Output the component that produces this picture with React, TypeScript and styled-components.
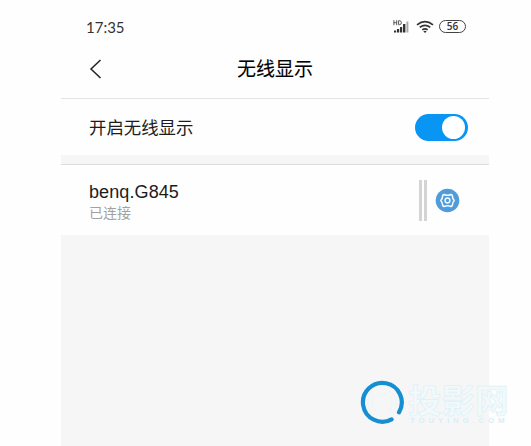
import React from "react";
import styled, { createGlobalStyle } from "styled-components";

const GlobalStyle = createGlobalStyle`
  html, body { margin: 0; background: #fff; overflow: hidden; }
  * { box-sizing: border-box; }
`;

const Page = styled.main`
  position: relative;
  width: 531px;
  height: 446px;
  padding-left: 61px;
  background: #fefefe;
  overflow: hidden;
  color: #1c1c1c;
  font-family: "Liberation Sans", "Noto Sans CJK SC", sans-serif;
`;

const Phone = styled.section`
  display: flex;
  flex-direction: column;
  width: 428px;
  height: 446px;
  background: #f6f6f6;
`;

const StatusBar = styled.div`
  display: flex;
  align-items: center;
  justify-content: space-between;
  height: 42px;
  padding: 11px 23px 0 25px;
  background: #fefefe;
`;

const Time = styled.span`
  font: 400 15px/20px Lato, sans-serif;
  color: #333;
`;

const StatusIcons = styled.div`
  display: flex;
  align-items: center;
`;

const WifiSlot = styled.span`
  display: flex;
  margin-left: 6px;
`;

const Battery = styled.span`
  width: 27px;
  height: 13px;
  margin-left: 5px;
  border: 1px solid #444;
  border-radius: 7px;
  font: 600 10px/11px "Open Sans", sans-serif;
  text-align: center;
  color: #333;
`;

const Header = styled.header`
  display: grid;
  grid-template-columns: 60px 1fr 60px;
  align-items: center;
  height: 57px;
  padding-bottom: 3px;
  border-bottom: 1px solid #e4e4e4;
  background: #fefefe;
`;

const BackButton = styled.button`
  display: flex;
  padding: 0 0 0 28px;
  border: 0;
  background: none;
`;

const Title = styled.h1`
  margin: 2px 0 0;
  font-size: 19px;
  font-weight: 400;
  line-height: 28px;
  text-align: center;
  color: #000;
  -webkit-text-stroke: 0.1px #000;
`;

const SettingRow = styled.div`
  display: flex;
  align-items: center;
  justify-content: space-between;
  height: 56px;
  padding: 0 21px 0 28px;
  background: #fefefe;
`;

const SettingLabel = styled.span`
  padding-top: 2px;
  font-size: 17.4px;
  line-height: 26px;
`;

const Toggle = styled.button`
  display: flex;
  justify-content: flex-end;
  width: 53px;
  height: 27px;
  padding: 2px 3px;
  border: 0;
  border-radius: 14px;
  background: #0895f4;
`;

const Knob = styled.span`
  width: 23px;
  height: 23px;
  border-radius: 50%;
  background: #fff;
`;

const DeviceRow = styled.div`
  display: flex;
  align-items: center;
  height: 71px;
  margin-top: 9px;
  padding: 0 29px 0 28px;
  border-top: 1px solid #dcdcdc;
  background: #fefefe;
`;

const DeviceText = styled.div`
  display: flex;
  flex: 1;
  flex-direction: column;
  padding-top: 3px;
`;

const DeviceName = styled.span`
  font-size: 18px;
  line-height: 22px;
  letter-spacing: 0.1px;
`;

const DeviceState = styled.span`
  font-size: 14px;
  line-height: 20px;
  color: #a2a2a2;
`;

const Divider = styled.span`
  width: 8px;
  height: 41px;
  margin-right: 8px;
  border: solid #d4d4d4;
  border-width: 0 3px;
`;

const Watermark = styled.div`
  position: absolute;
  left: 360px;
  top: 379px;
  display: flex;
  width: 152px;
  height: 48px;
`;

const BrandText = styled.div`
  display: flex;
  flex-direction: column;
  margin-left: 4px;
  padding-top: 3px;
`;

const BrandName = styled.span`
  height: 34px;
  font: 700 33.5px/33px "Noto Sans CJK SC", sans-serif;
  color: #f3f9fb;
  -webkit-text-stroke: 0.7px #dbf2f9;
  white-space: nowrap;
`;

const BrandDomain = styled.span`
  padding-left: 2px;
  font: 700 8px/10px "Liberation Sans", sans-serif;
  letter-spacing: 3.75px;
  color: #d9eff7;
  white-space: nowrap;
`;

const SignalIcon = () => (
  <svg width="17" height="14" viewBox="0 0 17 14" fill="none">
    <path d="M.9.2v5M3.7.2v5M.9 2.7h2.8M5.6.7v4h1q1.8-.2 1.8-2t-1.8-2h-1" stroke="#444" strokeWidth=".9" />
    <path d="M1 10.5h2.2v2H1zM4 9h2.2v3.5H4zM7 7h2.2v5.5H7zM10 4h2.4v8.5H10z" fill="#333" />
    <path d="M13.4 1.5h2v11h-2z" fill="#aaa" />
  </svg>
);

const WifiIcon = () => (
  <svg width="18" height="14" viewBox="0 0 18 14" fill="none">
    <path d="M1 4.8Q9-1.4 17 4.8M3.7 7.4q5.3-4 10.6 0M6.3 9.9q2.7-2 5.4 0" stroke="#333" strokeWidth="1.7" />
    <path d="m7.3 11.3 1.7 1.8 1.7-1.8Q9 10.3 7.3 11.3" fill="#333" />
  </svg>
);

const GearIcon = () => (
  <svg width="25" height="25" viewBox="0 0 25 25" fill="none">
    <circle cx="12.5" cy="12.5" r="11.8" fill="#509bda" />
    <path d="M9 6.5q3.5 1.6 7 0l1.2.7Q17.5 10.8 19.2 12.5q-1.7 1.7-2 5.3l-1.2.7q-3.5-1.6-7 0l-1.2-.7q-.3-3.6-2-5.3 1.7-1.7 2-5.3z" stroke="#f2faff" strokeWidth="1.6" strokeLinejoin="round" />
    <circle cx="12.5" cy="12.5" r="2.4" stroke="#f2faff" strokeWidth="1.5" />
  </svg>
);

const BrandIcon = () => (
  <svg width="44" height="46" viewBox="0 0 44 46" fill="none">
    <path d="M39 33.3A19.4 19.4 0 1 0 31.6 40.4" stroke="#168fd2" strokeWidth="4.2" strokeLinecap="round" />
    <path d="M32 34c7-7 5-18-3-22M12 13c-7 7-5 19 3 23M14 16c-4 6-3 13 3 17M29 16c5 6 4 13-1 17M17 14l4 4 3-4 2 3" stroke="#e9f5f9" />
  </svg>
);

export default function App() {
  return (
    <Page>
      <GlobalStyle />
      <Phone>
        <StatusBar>
          <Time>17:35</Time>
          <StatusIcons>
            <SignalIcon />
            <WifiSlot><WifiIcon /></WifiSlot>
            <Battery>56</Battery>
          </StatusIcons>
        </StatusBar>
        <Header>
          <BackButton aria-label="返回">
            <svg width="13" height="20" viewBox="0 0 13 20" fill="none">
              <path d="M11.5 1 2 10l9.5 9" stroke="#222" strokeWidth="1.5" />
            </svg>
          </BackButton>
          <Title>无线显示</Title>
        </Header>
        <SettingRow>
          <SettingLabel>开启无线显示</SettingLabel>
          <Toggle role="switch" aria-checked="true" aria-label="开启无线显示"><Knob /></Toggle>
        </SettingRow>
        <DeviceRow>
          <DeviceText>
            <DeviceName>benq.G845</DeviceName>
            <DeviceState>已连接</DeviceState>
          </DeviceText>
          <Divider />
          <GearIcon />
        </DeviceRow>
      </Phone>
      <Watermark>
        <BrandIcon />
        <BrandText>
          <BrandName>投影网</BrandName>
          <BrandDomain>TOUYING.COM</BrandDomain>
        </BrandText>
      </Watermark>
    </Page>
  );
}
